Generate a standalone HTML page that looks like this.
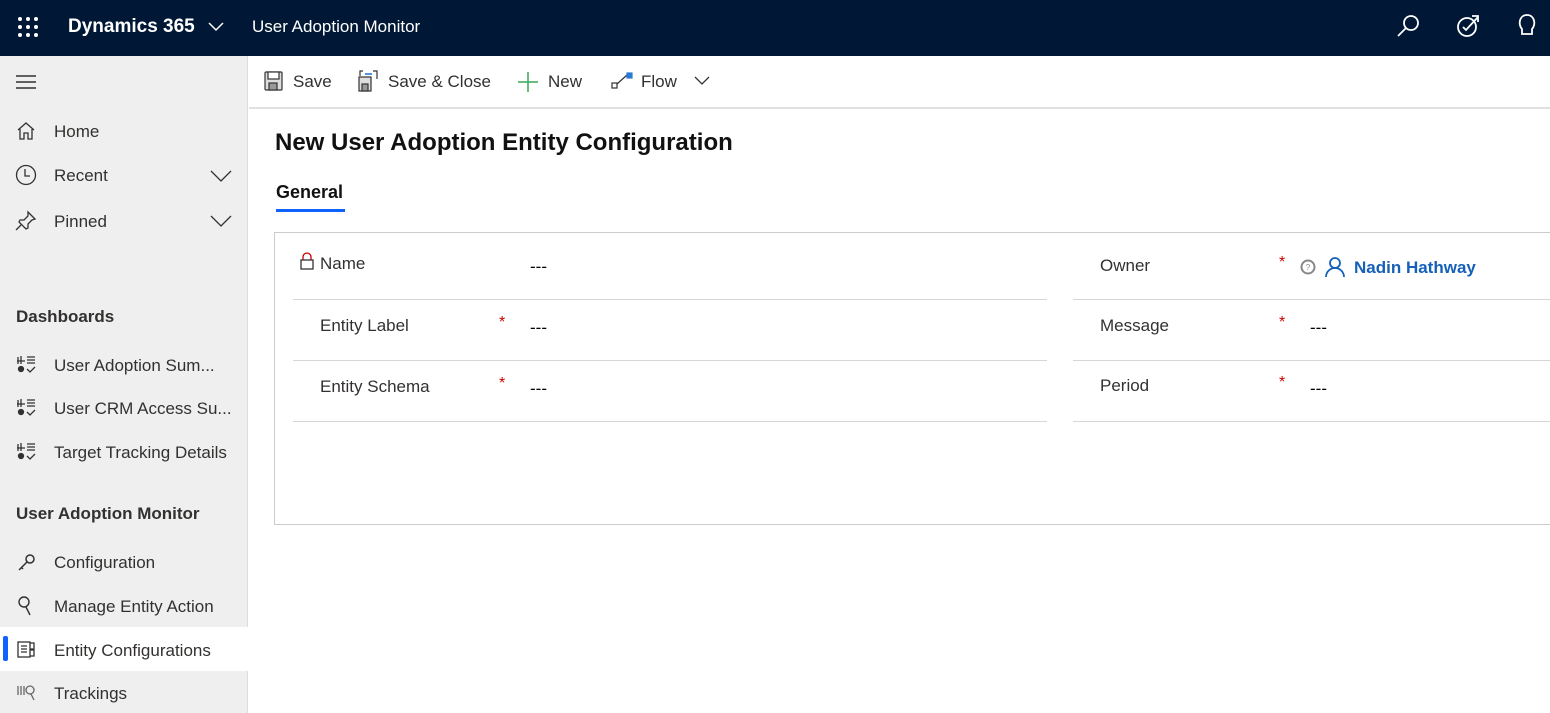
<!DOCTYPE html>
<html><head><meta charset="utf-8"><style>
*{margin:0;padding:0;box-sizing:border-box}
body{width:1550px;height:713px;overflow:hidden;font-family:"Liberation Sans",sans-serif;background:#fff;position:relative;color:#323130}
.a{position:absolute;white-space:nowrap}
.top{left:0;top:0;width:1550px;height:56px;background:#001835}
.side{left:0;top:56px;width:248px;height:657px;background:#efefef;border-right:1px solid #ddd}
.nav{font-size:17px;color:#323130}
.hd{font-size:17px;font-weight:bold;color:#323130}
.cmd{font-size:17px;color:#323130}
.lbl{font-size:17px;color:#323130}
.val{font-size:17px;color:#000}
.req{color:#c00;font-size:16px}
.ln{height:1px;background:#d6d6d6}
</style></head><body>
<div class="a top"></div>
<svg class="a" style="left:17px;top:16px" width="22" height="22"><g fill="#fff"><circle cx="3" cy="3" r="2"/><circle cx="11" cy="3" r="2"/><circle cx="19" cy="3" r="2"/><circle cx="3" cy="11" r="2"/><circle cx="11" cy="11" r="2"/><circle cx="19" cy="11" r="2"/><circle cx="3" cy="19" r="2"/><circle cx="11" cy="19" r="2"/><circle cx="19" cy="19" r="2"/></g></svg>
<div class="a" style="left:68px;top:16px;color:#fff;font-size:19px;font-weight:bold">Dynamics 365</div>
<svg class="a" style="left:208px;top:22px" width="16" height="10"><path d="M1 1l7 7 7-7" stroke="#fff" fill="none" stroke-width="1.5"/></svg>
<div class="a" style="left:252px;top:17px;color:#fff;font-size:17px">User Adoption Monitor</div>
<svg class="a" style="left:1396px;top:13px" width="26" height="26" fill="none" stroke="#fff" stroke-width="1.8"><circle cx="15" cy="10" r="7"/><path d="M10 15L2 23"/></svg>
<svg class="a" style="left:1456px;top:13px" width="26" height="26" fill="none" stroke="#fff" stroke-width="1.8"><circle cx="11" cy="14" r="9"/><path d="M7 14l3 3 12-13M16 3h6v6"/></svg>
<svg class="a" style="left:1516px;top:12px" width="22" height="26" fill="none" stroke="#fff" stroke-width="1.8"><path d="M6 17C2 13 3 3 11 3s9 10 5 14v5H6z"/></svg>

<div class="a side"></div>
<svg class="a" style="left:16px;top:75px" width="20" height="14" stroke="#323130" stroke-width="1.4"><path d="M0 1h20M0 7h20M0 13h20"/></svg>
<svg class="a" style="left:16px;top:121px" width="20" height="20" fill="none" stroke="#323130" stroke-width="1.3"><path d="M2 9L10 2l8 7M4 8v10h4v-6h4v6h4V8"/></svg>
<div class="a nav" style="left:54px;top:122px">Home</div>
<svg class="a" style="left:15px;top:164px" width="22" height="22" fill="none" stroke="#323130" stroke-width="1.3"><circle cx="11" cy="11" r="9.5"/><path d="M10 5v7h5"/></svg>
<div class="a nav" style="left:54px;top:166px">Recent</div>
<svg class="a" style="left:210px;top:170px" width="22" height="12"><path d="M1 1l10 10 10-10" stroke="#323130" fill="none" stroke-width="1.3"/></svg>
<svg class="a" style="left:15px;top:210px" width="22" height="22" fill="none" stroke="#323130" stroke-width="1.3"><path d="M13 2l7 7-3 1-4 4v4l-2 1-7-7 1-2h4l4-4zM6 15l-5 5"/></svg>
<div class="a nav" style="left:54px;top:212px">Pinned</div>
<svg class="a" style="left:210px;top:215px" width="22" height="12"><path d="M1 1l10 10 10-10" stroke="#323130" fill="none" stroke-width="1.3"/></svg>
<div class="a hd" style="left:16px;top:307px">Dashboards</div>
<div class="a nav" style="left:54px;top:356px">User Adoption Sum...</div>
<div class="a nav" style="left:54px;top:399px">User CRM Access Su...</div>
<div class="a nav" style="left:54px;top:443px">Target Tracking Details</div>
<svg class="a" style="left:16px;top:355px" width="20" height="20" stroke="#323130" fill="none" stroke-width="1.3"><path d="M2 2v7M5 1v8M1 6h8M11 2h8M11 5h8M11 8h8M11 14l3 3 5-5"/><circle cx="5" cy="14" r="2.5" fill="#323130"/></svg>
<svg class="a" style="left:16px;top:398px" width="20" height="20" stroke="#323130" fill="none" stroke-width="1.3"><path d="M2 2v7M5 1v8M1 6h8M11 2h8M11 5h8M11 8h8M11 14l3 3 5-5"/><circle cx="5" cy="14" r="2.5" fill="#323130"/></svg>
<svg class="a" style="left:16px;top:442px" width="20" height="20" stroke="#323130" fill="none" stroke-width="1.3"><path d="M2 2v7M5 1v8M1 6h8M11 2h8M11 5h8M11 8h8M11 14l3 3 5-5"/><circle cx="5" cy="14" r="2.5" fill="#323130"/></svg>
<div class="a hd" style="left:16px;top:504px">User Adoption Monitor</div>
<svg class="a" style="left:17px;top:552px" width="20" height="20" stroke="#323130" fill="none" stroke-width="1.5"><circle cx="13" cy="7" r="4"/><path d="M10 10L2 18M4 15l2 2"/></svg>
<div class="a nav" style="left:54px;top:553px">Configuration</div>
<svg class="a" style="left:17px;top:595px" width="20" height="22" stroke="#323130" fill="none" stroke-width="1.4"><circle cx="7" cy="7" r="5"/><path d="M9 12l4 8"/></svg>
<div class="a nav" style="left:54px;top:597px">Manage Entity Action</div>
<div class="a" style="left:0;top:627px;width:248px;height:44px;background:#fff"></div>
<div class="a" style="left:3px;top:636px;width:5px;height:25px;background:#0f62fe;border-radius:2px"></div>
<svg class="a" style="left:16px;top:639px" width="22" height="22" stroke="#323130" fill="none" stroke-width="1.3"><rect x="2" y="3" width="12" height="15"/><path d="M5 7h6M5 10h6M5 13h6M14 4h4v6h-4M14 11h4v6h-4"/></svg>
<div class="a nav" style="left:54px;top:641px">Entity Configurations</div>
<svg class="a" style="left:16px;top:683px" width="22" height="20" stroke="#666" fill="none" stroke-width="1.3"><path d="M2 3v9M5 3v9M8 3v9"/><circle cx="14" cy="7" r="4"/><path d="M15 11l3 6"/></svg>
<div class="a nav" style="left:54px;top:684px">Trackings</div>

<div class="a" style="left:249px;top:107px;width:1301px;height:2px;background:#e1e1e1"></div>
<svg class="a" style="left:264px;top:71px" width="20" height="20" stroke="#333" fill="#ddd" stroke-width="1.2"><rect x="1" y="1" width="17" height="18" rx="1"/><rect x="4" y="1" width="11" height="7" fill="#fff"/><rect x="5" y="12" width="8" height="7" fill="#999"/></svg>
<div class="a cmd" style="left:293px;top:72px">Save</div>
<svg class="a" style="left:357px;top:69px" width="22" height="24" stroke="#333" fill="#ddd" stroke-width="1.2"><rect x="2" y="8" width="12" height="14"/><rect x="5" y="15" width="6" height="7" fill="#999"/><path d="M6 2h-3v5M16 2h4v8" fill="none"/><path d="M8 5h7" stroke="#2a7ad5" stroke-width="1.6"/></svg>
<div class="a cmd" style="left:388px;top:72px">Save &amp; Close</div>
<svg class="a" style="left:517px;top:71px" width="22" height="22" stroke="#3aa655" stroke-width="1.5"><path d="M11 1v20M1 11h20"/></svg>
<div class="a cmd" style="left:548px;top:72px">New</div>
<svg class="a" style="left:611px;top:71px" width="24" height="20" stroke="#333" fill="none" stroke-width="1.2"><rect x="1" y="12" width="5" height="5"/><path d="M6 13l10-9"/><rect x="16" y="2" width="5" height="5" fill="#2a7ad5" stroke="#2a7ad5"/></svg>
<div class="a cmd" style="left:641px;top:72px">Flow</div>
<svg class="a" style="left:694px;top:76px" width="16" height="10"><path d="M1 1l7 7 7-7" stroke="#333" fill="none" stroke-width="1.3"/></svg>

<div class="a" style="left:275px;top:129px;font-size:24px;font-weight:bold;color:#111">New User Adoption Entity Configuration</div>
<div class="a" style="left:276px;top:182px;font-size:18px;font-weight:bold;color:#111">General</div>
<div class="a" style="left:276px;top:209px;width:69px;height:3px;background:#0f62fe"></div>
<div class="a" style="left:274px;top:232px;width:1290px;height:293px;border:1px solid #ccc"></div>

<svg class="a" style="left:299px;top:252px" width="16" height="18" stroke="#c00" fill="none" stroke-width="1.3"><path d="M4 8V5a4 4 0 018 0v3"/><rect x="2" y="8" width="12" height="9" stroke="#333"/></svg>
<div class="a lbl" style="left:320px;top:254px">Name</div>
<div class="a val" style="left:530px;top:257px">---</div>
<div class="a ln" style="left:293px;top:299px;width:754px"></div>
<div class="a lbl" style="left:320px;top:316px">Entity Label</div>
<div class="a req" style="left:499px;top:314px">*</div>
<div class="a val" style="left:530px;top:318px">---</div>
<div class="a ln" style="left:293px;top:360px;width:754px"></div>
<div class="a lbl" style="left:320px;top:377px">Entity Schema</div>
<div class="a req" style="left:499px;top:375px">*</div>
<div class="a val" style="left:530px;top:379px">---</div>
<div class="a ln" style="left:293px;top:421px;width:754px"></div>

<div class="a lbl" style="left:1100px;top:256px">Owner</div>
<div class="a req" style="left:1279px;top:254px">*</div>
<svg class="a" style="left:1300px;top:259px" width="16" height="16"><circle cx="8" cy="8" r="6.5" fill="none" stroke="#888" stroke-width="2"/><text x="8" y="11" font-size="8" text-anchor="middle" fill="#888" font-family="Liberation Sans">?</text></svg>
<svg class="a" style="left:1325px;top:256px" width="20" height="22" stroke="#1560b8" fill="none" stroke-width="1.8"><circle cx="10" cy="7" r="5"/><path d="M1 21a9 9 0 0118 0"/></svg>
<div class="a" style="left:1354px;top:258px;font-size:17px;font-weight:bold;color:#1560b8">Nadin Hathway</div>
<div class="a ln" style="left:1073px;top:299px;width:477px"></div>
<div class="a lbl" style="left:1100px;top:316px">Message</div>
<div class="a req" style="left:1279px;top:314px">*</div>
<div class="a val" style="left:1310px;top:318px">---</div>
<div class="a ln" style="left:1073px;top:360px;width:477px"></div>
<div class="a lbl" style="left:1100px;top:376px">Period</div>
<div class="a req" style="left:1279px;top:374px">*</div>
<div class="a val" style="left:1310px;top:379px">---</div>
<div class="a ln" style="left:1073px;top:421px;width:477px"></div>
</body></html>
